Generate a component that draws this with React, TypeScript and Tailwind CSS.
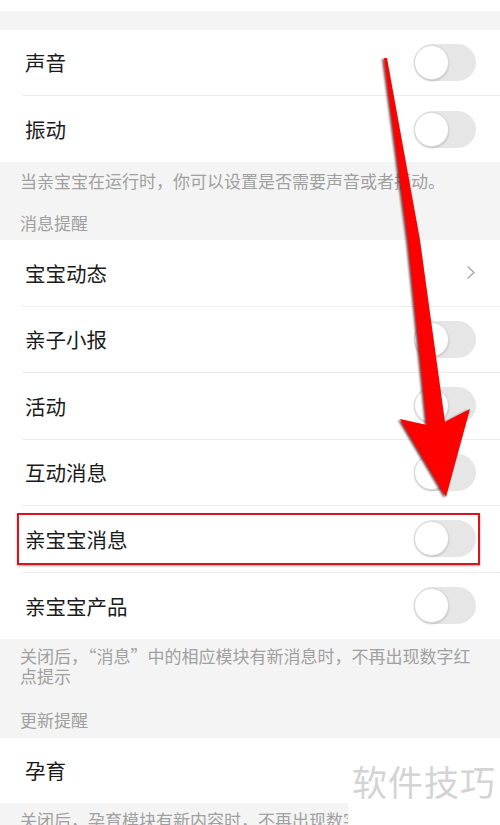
import React from "react";

const FONT = { fontFamily: '"Noto Sans CJK SC", "Noto Sans", sans-serif' };

function Toggle() {
  return (
    <div className="relative w-[62px] h-[37px] rounded-full bg-[#e6e6e6]">
      <div className="absolute left-0 top-[1px] w-[35px] h-[35px] rounded-full bg-white border border-[#d9d9d9] shadow-[0_1px_2px_rgba(0,0,0,0.18)]" />
    </div>
  );
}

function Chevron() {
  return (
    <svg width="10" height="15" viewBox="0 0 10 15">
      <path d="M1.5 1.5 L8 7.5 L1.5 13.5" fill="none" stroke="#a6a6a6" strokeWidth="1.3" />
    </svg>
  );
}

function Row({ label, last, chevron, h = "h-[66px]" }: { label: string; last?: boolean; chevron?: boolean; h?: string }) {
  return (
    <div className={`${h} pl-[22px]`}>
      <div className={`h-full flex items-center justify-between pr-[24px] ${last ? "" : "border-b border-[#ededed]"}`}>
        <span className="pl-[3px] text-[20.5px] text-[#1a1a1a] leading-none">{label}</span>
        {chevron ? <Chevron /> : <Toggle />}
      </div>
    </div>
  );
}

function Note({ children, className = "" }: { children: React.ReactNode; className?: string }) {
  return <div className={`pl-[20px] pr-[25px] text-[17px] leading-[20px] text-[#a0a0a0] ${className}`}>{children}</div>;
}

export default function App() {
  return (
    <div className="relative w-[500px] h-[825px] overflow-hidden bg-[#f4f4f4]" style={FONT}>
      <div className="h-[11px] bg-white" />
      <div className="h-[19px]" />
      <section className="bg-white">
        <Row label="声音" />
        <Row label="振动" last />
      </section>
      <div className="pt-[9px] pb-[7px]">
        <Note>当亲宝宝在运行时，你可以设置是否需要声音或者振动。</Note>
        <Note className="mt-[22px]">消息提醒</Note>
      </div>
      <section className="bg-white">
        <Row label="宝宝动态" chevron h="h-[66.5px]" />
        <Row label="亲子小报" h="h-[66.5px]" />
        <Row label="活动" h="h-[66.5px]" />
        <Row label="互动消息" h="h-[66.5px]" />
        <Row label="亲宝宝消息" h="h-[66.5px]" />
        <Row label="亲宝宝产品" last h="h-[66.5px]" />
      </section>
      <div className="pt-[7px] pb-[8px]">
        <Note>关闭后，“消息”中的相应模块有新消息时，不再出现数字红点提示</Note>
        <Note className="mt-[24px]">更新提醒</Note>
      </div>
      <section className="bg-white">
        <Row label="孕育" last h="h-[65px]" />
      </section>
      <div className="pt-[7px]">
        <Note>关闭后，孕育模块有新内容时，不再出现数字红点提示</Note>
      </div>

      {/* highlight box */}
      <div className="absolute left-[17px] top-[513px] w-[463px] h-[52px] border-2 border-[#d8141c] shadow-[0_1px_2px_rgba(0,0,0,0.35)] pointer-events-none" />

      {/* arrow */}
      <svg
        className="absolute left-0 top-0 pointer-events-none"
        width="500"
        height="825"
        viewBox="0 0 500 825"
        style={{ filter: "drop-shadow(-1.5px 1px 1px rgba(90,0,0,0.75))" }}
      >
        <polygon
          points="384,58 387,58 420,240 445,422 470,409 446,497 400,419 427,425 408,240"
          fill="#ff0000"
        />
      </svg>

      {/* watermark */}
      <div className="absolute left-[348px] top-[745px] w-[152px] h-[80px] bg-white flex items-start justify-center pt-[18px]">
        <span className="text-[35px] leading-none text-[#d4d4d4] tracking-[1px]">软件技巧</span>
      </div>
    </div>
  );
}
